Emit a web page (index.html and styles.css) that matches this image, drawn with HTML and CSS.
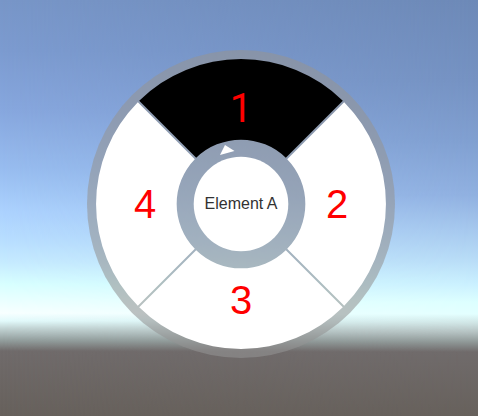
FILE: index.html
```html
<!DOCTYPE html>
<html lang="en">
<head>
<meta charset="utf-8">
<title>Radial menu</title>
<link rel="stylesheet" href="styles.css">
</head>
<body>
<main class="scene">
  <nav class="wheel" aria-label="Radial menu">
    <svg class="wheel-art" viewBox="-154 -154 308 308" aria-hidden="true">
      <defs>
        <path id="segment" d="M-101.8 -103.2A145 145 0 0 1 101.8 -103.2L44.8 -46.2A64.4 64.4 0 0 0 -44.8 -46.2Z"/>
      </defs>
      <circle class="disc" r="154"/>
      <use href="#segment" class="segment selected"/>
      <use href="#segment" class="segment" transform="rotate(90)"/>
      <use href="#segment" class="segment" transform="rotate(180)"/>
      <use href="#segment" class="segment" transform="rotate(270)"/>
      <circle class="segment" r="47.3"/>
      <path class="segment" d="M-16 -59L-6.5 -53L-21 -49Z"/>
    </svg>
    <button class="item north" type="button">1</button>
    <button class="item east" type="button">2</button>
    <button class="item south" type="button">3</button>
    <button class="item west" type="button">4</button>
    <span class="caption">Element A</span>
  </nav>
</main>
</body>
</html>
```
FILE: styles.css
```css
* {
  box-sizing: border-box;
}

body {
  margin: 0;
  font-family: "Liberation Sans", Arial, sans-serif;
}

.scene {
  position: relative;
  display: flex;
  justify-content: center;
  align-items: flex-start;
  min-height: 100vh;
  padding: 50px 0 50px 4px;
  background: linear-gradient(to bottom,
    #7896c8 0, #7c9bd0 50px, #87a7de 110px, #98bdf0 170px,
    #acd2fe 212px, #b8deff 240px, #c6ebff 262px, #d8ffff 284px, #f8ffff 313px,
    #e2fafb 321px, #c4d6d6 328px, #94a09f 340px, #706b6b 351px, #67615c 416px);
}

/* Darker sky that fades in towards the right */
.scene::before {
  content: "";
  position: absolute;
  inset: 0;
  background: linear-gradient(to bottom,
    #6d89b7 0, #7592c2 80px, #809fd0 140px, #90b0e0 195px, #a6c8ee 230px,
    #b8dcf7 260px, #caf0ff 284px, #dcffff 302px, #e2ffff 314px,
    #cfe4e4 323px, #b5c2c2 332px, #8f9897 342px, #706b6b 352px, #67615c 416px);
  mask-image: linear-gradient(to right, transparent, #000);
}

.wheel {
  position: relative;
  display: grid;
  grid-template-columns: repeat(3, 96px);
  grid-template-rows: repeat(3, 96px);
  padding: 10px;
}

.wheel-art {
  position: absolute;
  inset: 0;
  width: 100%;
  height: 100%;
}

.disc {
  fill: rgba(148, 148, 148, 0.58);
}

.segment {
  fill: #fff;
}

.selected {
  fill: #000;
}

.item {
  position: relative;
  padding: 0;
  border: 0;
  background: none;
  color: #f00;
  font: 40px "Liberation Sans", Arial, sans-serif;
  cursor: pointer;
}

.north {
  grid-area: 1 / 2;
  font-family: Roboto, Arial, sans-serif;
}

.east { grid-area: 2 / 3; }
.south { grid-area: 3 / 2; }
.west { grid-area: 2 / 1; }

.caption {
  position: relative;
  grid-area: 2 / 2;
  place-self: center;
  color: #323232;
  font-size: 16px;
  line-height: 20px;
  white-space: nowrap;
}
```
